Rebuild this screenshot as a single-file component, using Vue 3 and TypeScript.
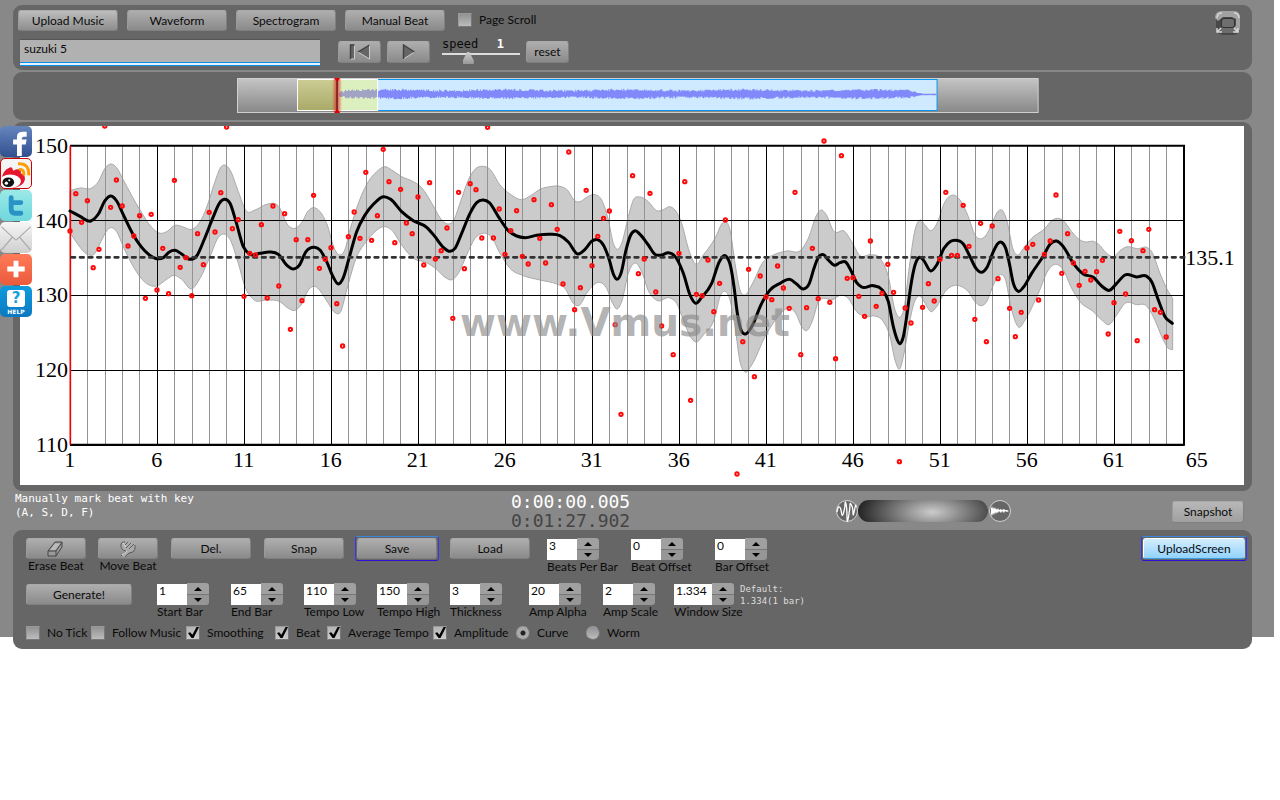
<script setup lang="ts">
import { reactive, ref } from 'vue'

type Pt = [number, number]
interface Field { id: string; label: string; value: number }
interface Tick { label: string; checked: boolean }

const shift = (dx: number, flat: number[]): Pt[] => {
  const out: Pt[] = []
  for (let i = 0; i < flat.length; i += 2) out.push([flat[i] + dx, flat[i + 1]])
  return out
}

// Chart space: three units per pixel, one beat every 17.4 units.
const barX = (bar: number): number => 211 + (bar - 1) * 52.2
const beatX = (i: number): number => 210 + i * 17.4

const curve: Pt[] = [
  ...shift(0, [210,273,240,289,272,303,295,282,315,242,333,228,350,243,368,280,400,345,435,393,470,416,490,413,508,396,525,391,545,402,570,418,590,408,612,360,640,290,658,250,674,238,690,250,708,305,730,380,750,403,780,400,810,396,835,403,862,437,880,447,897,437,918,395,943,382]),
  ...shift(960, [0,390,20,425,40,472,55,492,70,473,87,415,110,335,135,285,160,253,190,230,212,238,245,275,280,302,320,322,345,350,370,382,390,394,405,385,425,340,450,280,470,248,490,240,508,248,535,290,565,332,590,348,615,353,650,346,690,343,720,347,745,366,773,402,795,388,815,364,832,359,850,375,868,420,880,462,891,478,903,460,918,390,932,345,946,332]),
  ...shift(1920, [0,343,25,375,45,403,65,405,85,398,105,409,130,460,150,525,167,550,185,532,215,490,238,425,257,408,272,440,282,500,292,580,303,630,315,642,335,620,365,550,390,510,420,490,450,478,470,492,490,507,508,490,522,445,535,412,550,404,565,420,583,436,600,428,617,426,632,450,650,488,665,501,700,497,725,508,745,545,760,620,772,660,779,671,790,650,800,590,812,500,825,435,838,412,850,420,872,453,890,435,912,385,930,365]),
  ...shift(2850, [15,361,40,372,60,410,78,445,95,457,112,440,130,395,143,371,155,367,167,385,178,430,190,490,205,514,220,502,245,460,280,408,300,373,320,363,340,380,370,430,400,462,430,472,455,498,478,511,500,490,525,465,560,471,590,469,605,485,625,540,645,590,667,610]),
]
const upper: Pt[] = [
  ...shift(0, [210,212,240,204,275,204,295,185,315,145,333,132,350,143,370,180,420,270,455,322,480,340,500,335,525,316,550,321,575,328,595,313,615,275,645,185,660,145,675,135,690,150,715,215,738,272,765,270,800,253,835,258,865,317,885,325,905,308,925,272,943,263]),
  ...shift(960, [0,275,20,310,45,390,60,405,75,388,90,330,115,250,145,185,170,155,195,140,215,150,245,170,280,185,305,203,340,258,365,300,385,312,400,303,420,250,445,180,465,148,490,139,510,148,540,195,570,222,605,239,635,225,660,208,690,200,720,199,742,210,765,243,780,245,800,232,825,224,845,240,865,300,880,370,893,388,905,370,925,290,940,240,960,231]),
  ...shift(1920, [25,245,50,272,70,269,88,260,105,270,125,310,145,385,168,433,190,405,230,345,245,312,258,305,270,330,285,430,300,510,315,525,335,495,370,425,400,405,440,393,485,388,505,355,530,285,543,270,558,283,580,332,615,335,635,365,660,407,690,404,720,415,745,470,765,570,779,592,792,565,808,440,825,330,840,300,855,315,873,332,890,312,915,245]),
  ...shift(2850, [10,225,30,240,55,290,75,345,95,356,112,340,130,300,145,273,158,272,170,300,190,390,205,405,220,385,245,355,285,325,305,302,322,295,340,302,365,335,390,360,405,366,430,364,445,372,470,400,490,410,510,392,525,382,565,386,590,382,605,395,630,460,655,515,668,535]),
]
const lower: Pt[] = [
  ...shift(0, [210,338,235,375,260,402,285,400,305,360,322,330,335,323,350,335,370,380,400,440,435,487,470,498,500,478,522,466,545,478,575,507,600,475,630,410,655,352,672,342,690,358,715,430,735,500,760,538,800,540,840,545,865,565,885,571,905,552,925,510,945,499]),
  ...shift(960, [0,512,25,550,45,578,62,575,80,510,110,410,135,370,165,335,190,320,215,330,245,375,280,415,320,428,350,448,375,472,397,479,415,460,440,405,465,355,490,340,515,352,540,400,570,445,610,467,660,480,710,492,735,505,760,550,778,556,800,520,820,495,840,487,860,505,878,550,890,567,905,545,925,460,945,429,965,455]),
  ...shift(1920, [25,512,50,541,90,534,110,550,130,600,150,648,168,666,190,645,225,590,240,530,257,515,270,540,285,620,300,725,315,756,335,735,375,650,410,595,430,572,450,563,470,585,485,620,500,632,518,600,535,545,550,535,575,540,605,525,625,535,650,575,680,590,705,588,730,605,750,650,765,720,779,747,792,700,808,610,822,550,840,528,855,550,873,575,890,560,915,515]),
  ...shift(2850, [10,497,35,500,55,515,75,545,95,557,110,545,130,495,150,464,165,475,185,570,207,622,225,600,265,520,295,450,320,433,340,450,365,505,390,545,430,575,455,600,477,614,500,585,525,550,560,554,590,558,610,590,640,660,655,685,668,689]),
]
const beats: number[] = [
  333,221,307,242,443,388,18,262,180,258,378,348,287,535,283,510,385,521,181,442,413,527,341,434,277,336,218,21,326,299,
  529,400,405,314,534,258,498,281,628,359,542,359,226,445,418,383,551,678,350,276,355,157,361,287,88,185,368,208,309,341,
  231,435,188,417,392,324,595,217,446,191,209,354,22,354,267,403,332,272,409,432,239,355,429,254,328,492,96,569,503,211,
  437,349,295,273,614,883,-1,167,461,417,220,516,618,-1,704,400,185,841,523,527,420,575,490,300,-1,1062,665,448,770,468,
  531,539,438,504,565,217,704,563,385,536,63,547,716,107,475,473,529,589,363,559,520,433,517,1025,564,609,-1,562,491,543,
  418,217,406,406,256,379,598,310,665,318,476,-1,565,650,577,384,373,540,403,363,225,460,341,429,496,454,480,455,421,642,
  548,334,522,362,662,392,328,569,577,651,
]

// Smooth path through points ordered along x, written as cubic Bézier segments.
const spline = (p: Pt[]): string => {
  const last = p.length - 1
  const step = (i: number): number => (p[i + 1][1] - p[i][1]) / (p[i + 1][0] - p[i][0])
  const slope = (i: number): number => {
    if (i === 0) return step(0)
    if (i === last) return step(last - 1)
    const h0 = p[i][0] - p[i - 1][0]
    const h1 = p[i + 1][0] - p[i][0]
    return (h1 * step(i - 1) + h0 * step(i)) / (h0 + h1)
  }
  let d = ''
  for (let i = 0; i < last; i++) {
    const [x0, y0] = p[i]
    const [x1, y1] = p[i + 1]
    const h = (x1 - x0) / 3
    d += `C${(x0 + h).toFixed(1)} ${(y0 + h * slope(i)).toFixed(1)} ${(x1 - h).toFixed(1)} ${(y1 - h * slope(i + 1)).toFixed(1)} ${x1} ${y1}`
  }
  return d
}
const curvePath = `M${curve[0].join(' ')}${spline(curve)}`
const back = [...lower].reverse()
const bandPath = `M${upper[0].join(' ')}${spline(upper)}L${back[0].join(' ')}${spline(back)}Z`

const minorBars = Array.from({ length: 64 }, (_, i) => i + 1).filter((b) => b % 5 !== 1)
const majorBars = Array.from({ length: 13 }, (_, i) => 1 + i * 5)
const tempos = [150, 140, 130, 120, 110]
const tempoY = (t: number): number => 77 + (150 - t) * 22.45

const wave = (from: number, to: number): string => {
  let d = ''
  let seed = from * 7 + 3
  const rnd = (): number => (seed = (seed * 16807) % 2147483647) / 2147483647
  for (let x = from; x < to; x++) {
    const fade = x > 672 ? Math.max(0.08, 1 - (x - 672) / 14) : x < 108 ? 0.6 : 1
    const swell = 2.6 + Math.sin(x / 19) * 0.5
    d += `M${x + 0.5} ${(16 - (swell + rnd() * 2.3) * fade).toFixed(1)}V${(17 + (swell - 1 + rnd() * 2.3) * fade).toFixed(1)}`
  }
  return d
}
const waveShaded = wave(102, 140)
const waveOpen = wave(141, 699)

const tabs = ['Upload Music', 'Waveform', 'Spectrogram', 'Manual Beat']
const fileName = ref('suzuki 5')
const pageScroll = ref(false)
const speed = ref(31)
const mix = ref(50)
const topFields = reactive<Field[]>([
  { id: 'beats', label: 'Beats Per Bar', value: 3 },
  { id: 'beatoff', label: 'Beat Offset', value: 0 },
  { id: 'baroff', label: 'Bar Offset', value: 0 },
])
const fields = reactive<Field[]>([
  { id: 'start', label: 'Start Bar', value: 1 },
  { id: 'end', label: 'End Bar', value: 65 },
  { id: 'low', label: 'Tempo Low', value: 110 },
  { id: 'high', label: 'Tempo High', value: 150 },
  { id: 'thick', label: 'Thickness', value: 3 },
  { id: 'alpha', label: 'Amp Alpha', value: 20 },
  { id: 'scale', label: 'Amp Scale', value: 2 },
  { id: 'window', label: 'Window Size', value: 1.334 },
])
const ticks = reactive<Tick[]>([
  { label: 'No Tick', checked: false },
  { label: 'Follow Music', checked: false },
  { label: 'Smoothing', checked: true },
  { label: 'Beat', checked: true },
  { label: 'Average Tempo', checked: true },
  { label: 'Amplitude', checked: true },
])
const shape = ref('Curve')
</script>

<template>
  <main class="stage">
    <section class="panel head">
      <div class="row tabs">
        <button v-for="t in tabs" :key="t" class="btn tab">{{ t }}</button>
        <label class="check scroll"><input v-model="pageScroll" type="checkbox" />Page Scroll</label>
        <button class="full" aria-label="Full screen">
          <svg width="28" height="26" viewBox="0 0 28 26">
            <rect x="2" y="3" width="24" height="22" rx="7" fill="#484848" />
            <path d="M1 8Q1 1 8 1H20Q26 1 26 8V17Q26 22 22 23L19 18Q22 17 22 14V9L18 7H9L4 11Z" fill="#a2a2a2" />
            <path d="M5 21L8 17H19L22 22Q20 23 18 23H8Q6 23 5 21Z" fill="#6c6c6c" />
            <rect x="7.5" y="8.5" width="13" height="9" rx="2.5" fill="#6e6e6e" stroke="#333" />
            <path d="M3 8Q3 3 8 3M20 3Q25 3 25 8M3 18V22H8M3 22L7 18M24 18V22H19M24 22L20 18" fill="none" stroke="#d5d5d5" stroke-width="1.5" />
          </svg>
        </button>
      </div>
      <div class="row second">
        <input v-model="fileName" class="file" type="text" aria-label="File name" />
        <button class="btn media" aria-label="Back to start">
          <svg width="22" height="16" viewBox="0 0 22 16">
            <path d="M1.5 1H5.5V15H1.5ZM20.5 1V15L9 8Z" fill="#666" />
            <path d="M5.5 1V15H1.5M9 8L20.5 15V1" fill="none" stroke="#ccc" />
            <path d="M1.5 15V1H5.5M20.5 1L9 8" fill="none" stroke="#404040" stroke-width="1.4" />
          </svg>
        </button>
        <button class="btn media" aria-label="Play">
          <svg width="14" height="16" viewBox="0 0 14 16">
            <path d="M1.5 1L12.5 8L1.5 15Z" fill="#666" />
            <path d="M1.5 15L12.5 8" stroke="#ccc" />
            <path d="M1.5 15V1L12.5 8" fill="none" stroke="#404040" stroke-width="1.4" />
          </svg>
        </button>
        <label class="speed">
          <span class="speed-text">speed<b>1</b></span>
          <input v-model="speed" type="range" min="0" max="100" />
        </label>
        <button class="btn media">reset</button>
      </div>
    </section>

    <section class="panel overview">
      <svg class="overview-map" viewBox="0 0 801 35" preserveAspectRatio="none">
        <defs>
          <linearGradient id="grey" x2="0" y2="1"><stop offset="0" stop-color="#c4c4c4" /><stop offset="1" stop-color="#888" /></linearGradient>
          <linearGradient id="olive" x2="0" y2="1"><stop offset="0" stop-color="#cbcd94" /><stop offset="1" stop-color="#a9a968" /></linearGradient>
          <linearGradient id="glow"><stop offset="0" stop-color="#e03020" stop-opacity="0" /><stop offset="0.5" stop-color="#e82020" /><stop offset="1" stop-color="#e03020" stop-opacity="0" /></linearGradient>
        </defs>
        <rect x="0.5" y="0.5" width="800" height="34" fill="url(#grey)" stroke="#d0d0d0" />
        <rect x="100" y="1.5" width="599.5" height="31" fill="#cfeaff" stroke="#0a96ee" />
        <rect x="60.5" y="1.5" width="40" height="31" fill="url(#olive)" stroke="#fff" />
        <rect x="100.5" y="1.5" width="40" height="31" fill="#dcefbf" stroke="#fff" />
        <path :d="waveShaded" stroke="#a0a3c4" />
        <path :d="waveOpen" stroke="#8088fa" />
        <rect x="95" y="1" width="10" height="33" fill="url(#glow)" opacity="0.8" />
        <path d="M100 1V34" stroke="#300" />
        <path d="M97 0H103L101 3H99ZM97 35H103L101 32H99Z" fill="#e00000" />
      </svg>
    </section>

    <section class="panel plot">
      <svg class="chart" viewBox="60 18 3672 1077">
        <rect x="60" y="18" width="3672" height="1077" fill="#fff" />
        <path :d="bandPath" fill="#cbcbcb" stroke="#aaa" stroke-width="3" />
        <g shape-rendering="crispEdges" stroke-width="3">
          <path v-for="b in minorBars" :key="b" :d="`M${barX(b)} 77V974`" stroke="#939393" />
          <path v-for="b in majorBars" :key="b" :d="`M${barX(b)} 77V974`" stroke="#000" />
          <path v-for="t in tempos" :key="t" :d="`M210 ${tempoY(t)}H3552`" stroke="#000" />
        </g>
        <path d="M210 77H3552V974H210" fill="none" stroke="#000" stroke-width="6" />
        <path d="M211 77V974" stroke="#f00000" stroke-width="5" />
        <path :d="curvePath" class="line" stroke="#000" stroke-width="9" />
        <path d="M214 412H3558" class="line" stroke="#333" stroke-width="8" stroke-dasharray="11 15" />
        <template v-for="(y, i) in beats" :key="i">
          <circle v-if="y >= 0" :cx="beatX(i)" :cy="y" r="5" fill="none" stroke="#ff0a0a" stroke-width="6" />
        </template>
        <g class="axis">
          <text v-for="t in tempos" :key="t" x="204" :y="tempoY(t) + 21" text-anchor="end">{{ t }}</text>
          <text v-for="b in majorBars" :key="b" :x="barX(b) - 2" y="1041" text-anchor="middle">{{ b }}</text>
          <text x="3590" y="1041" text-anchor="middle">65</text>
          <text x="3556" y="434">135.1</text>
        </g>
        <text class="mark" x="1380" y="647">www.Vmus.net</text>
      </svg>
    </section>

    <section class="strip">
      <p class="hint">Manually mark beat with key<br />(A, S, D, F)</p>
      <div class="clock"><div class="now">0:00:00.005</div><div>0:01:27.902</div></div>
      <div class="mix">
        <svg width="22" height="24" viewBox="0 0 22 24">
          <circle cx="11" cy="12" r="10.5" fill="#666" stroke="#d0d0d0" />
          <path d="M1 13Q2 7 3.5 8T5.5 14T7.500 14T9 5T10 5T11 18T12.500 18T14 6T15.500 6T17 14T18.500 11T20 8" fill="none" stroke="#fff" stroke-width="1.3" />
        </svg>
        <input v-model="mix" type="range" aria-label="Volume" />
        <svg width="22" height="24" viewBox="0 0 22 24">
          <circle cx="11" cy="12" r="10.5" fill="#666" stroke="#d0d0d0" />
          <path d="M2 8L3 9V7L4 10L5 8L6 10L7 9L8 11L9 9L10 11L12 10L13 11L15 10L16 11L18 11L20 12L18 13L16 12L15 14L13 12L12 14L10 12L9 14L8 13L7 15L6 13L5 16L4 14L3 17L2 15Z" fill="#fff" />
        </svg>
      </div>
      <button class="btn snapshot">Snapshot</button>
    </section>

    <section class="panel controls">
      <div class="row actions">
        <div class="tool">
          <button id="erase" class="btn">
            <svg width="20" height="18" viewBox="0 0 20 18">
              <path d="M2 11L9 2H16L16 7L10 16H2Z" fill="#9b9b9b" stroke="#444" stroke-linejoin="round" />
              <path d="M2 11H10L16 2.5M10 11V16" fill="none" stroke="#444" />
              <path d="M9 3.500H14L9 10H4Z" fill="#bbb" />
            </svg>
          </button>
          <label for="erase">Erase Beat</label>
        </div>
        <div class="tool">
          <button id="move" class="btn">
            <svg width="20" height="18" viewBox="0 0 20 18">
              <path d="M3 16L8 11Q3 10 3 5Q3 1 7 2L10 3L14 2Q17 2 17 7Q17 12 11 13L7 17Z" fill="#ababab" />
              <path d="M3 16L8 11Q2 10 3 4Q4 1 7 2M7 5L10 2M8 8L13 3M11 9L16 4M17 5V9Q16 13 11 13L7 17" fill="none" stroke="#5c5c5c" />
              <path d="M5 3L8 7M4 15L9 11" stroke="#ddd" />
            </svg>
          </button>
          <label for="move">Move Beat</label>
        </div>
        <button class="btn wide">Del.</button>
        <button class="btn wide">Snap</button>
        <button class="btn wide focused">Save</button>
        <button class="btn wide">Load</button>
        <div class="top-fields">
          <div v-for="f in topFields" :key="f.id" class="field">
            <div class="spin">
              <input :id="f.id" v-model="f.value" type="number" />
              <span class="steps">
                <button :aria-label="`Increase ${f.label}`" @click="f.value++"></button>
                <button :aria-label="`Decrease ${f.label}`" @click="f.value--"></button>
              </span>
            </div>
            <label :for="f.id">{{ f.label }}</label>
          </div>
        </div>
        <button class="btn upload focused">UploadScreen</button>
      </div>

      <div class="settings">
        <button class="btn generate">Generate!</button>
        <div v-for="f in fields" :key="f.id" class="field" :class="f.id">
          <div class="spin">
            <input :id="f.id" v-model="f.value" type="number" step="any" />
            <span class="steps">
              <button :aria-label="`Increase ${f.label}`" @click="f.value++"></button>
              <button :aria-label="`Decrease ${f.label}`" @click="f.value--"></button>
            </span>
          </div>
          <label :for="f.id">{{ f.label }}</label>
        </div>
        <p class="default">Default:<br />1.334(1 bar)</p>
      </div>

      <div class="options">
        <label v-for="t in ticks" :key="t.label" class="check"><input v-model="t.checked" type="checkbox" />{{ t.label }}</label>
        <label v-for="s in ['Curve', 'Worm']" :key="s" class="check"><input v-model="shape" type="radio" name="shape" :value="s" />{{ s }}</label>
      </div>
    </section>

    <nav class="social">
      <a href="#" class="fb" aria-label="Facebook">
        <svg viewBox="0 0 32 32"><path d="M17 31V19H13V14H17V11Q17 6 23 6H27V11H24Q22 11 22 13V14H27L26 19H22V31Z" fill="#fff" /></svg>
      </a>
      <a href="#" class="weibo" aria-label="Weibo">
        <svg viewBox="0 0 32 32">
          <path d="M0 21Q1 12 8 9Q11 7 12 12Q18 9 20 12V15Q25 16 24 22Q22 29 11 30Q2 30 0 21Z" fill="#e6162d" />
          <ellipse cx="9" cy="23" rx="11" ry="7" fill="#fff" /><ellipse cx="7" cy="24" rx="6" ry="5" fill="#111" />
          <circle cx="5" cy="25" r="1.7" fill="#fff" /><circle cx="8" cy="22" r="1" fill="#fff" />
          <path d="M17 5Q29 4 28 17M18 11Q24 10 23 17" fill="none" stroke="#ff9c00" stroke-width="3" />
        </svg>
      </a>
      <a href="#" class="tw" aria-label="Twitter">
        <svg viewBox="0 0 32 32"><path d="M11 8V19Q11 24 15 24H21M11 13H21" fill="none" stroke="#2a93c5" stroke-width="5" stroke-linecap="round" /></svg>
      </a>
      <a href="#" class="mail" aria-label="Mail">
        <svg viewBox="0 0 32 32"><path d="M1 5L15 18Q16 19 17 18L31 5M1 29L12 16M31 29L20 16" fill="none" stroke="#aaa" stroke-width="1.2" /></svg>
      </a>
      <a href="#" class="plus" aria-label="Share">
        <svg viewBox="0 0 32 32"><path d="M16 7V24M7 15.500H25" fill="none" stroke="#fff" stroke-width="5" /></svg>
      </a>
      <a href="#" class="help"><b>?</b><span>HELP</span></a>
    </nav>
  </main>
</template>

<style>
body {
  margin: 0;
  background: #fff;
}
</style>

<style scoped>
* {
  box-sizing: border-box;
}
button,
input {
  font: inherit;
  color: inherit;
}
p {
  margin: 0;
}
.stage {
  position: relative;
  margin-right: 6px;
  padding: 5px 22px 0 13px;
  background: linear-gradient(#888, #888) no-repeat 0 0 / 100% calc(100% - 12px);
  font: 12px/14px Lato, 'Open Sans', sans-serif;
  color: #0a0a0a;
}
.panel {
  background: #666;
  border-radius: 9px;
  margin-bottom: 2px;
}
.row {
  display: flex;
  align-items: flex-start;
}
.btn {
  height: 21px;
  padding: 0;
  border: 1px solid #777;
  border-color: #aaa #808080 #808080 #9a9a9a;
  border-radius: 3px;
  background: linear-gradient(#aeaeae, #8a8a8a);
  display: flex;
  align-items: center;
  justify-content: center;
  flex: none;
}
.head {
  padding: 5px 10px 4px 5px;
}
.head .row {
  gap: 9px;
}
.head .tabs {
  height: 21px;
}
.head .second {
  padding: 6px 0 0 2px;
  gap: 6px;
}
.tab {
  width: 100px;
}
.tab:first-child {
  background: linear-gradient(#bdbdbd, #8e8e8e);
}
.check {
  display: flex;
  align-items: center;
  gap: 7px;
  overflow: hidden;
  white-space: nowrap;
}
.scroll {
  margin: 3px 0 0 4px;
}
.check input {
  appearance: none;
  flex: none;
  width: 14px;
  height: 14px;
  margin: 0;
  border: 1px solid #777;
  border-color: #999 #777 #777 #999;
  background: linear-gradient(#929292, #bcbcbc);
}
.check input[type='checkbox']:checked {
  background: linear-gradient(#b4b4b4, #ccc);
  position: relative;
}
.check input[type='checkbox']:checked::after {
  content: '';
  position: absolute;
  inset: 0 0 1px 1px;
  background: #000;
  clip-path: polygon(0 55%, 20% 48%, 40% 70%, 78% 0, 100% 0, 50% 100%, 32% 100%);
}
.check input[type='radio'] {
  border-radius: 50%;
}
.check input[type='radio']:checked {
  background: radial-gradient(circle, #222 0 2px, #aaa 3px);
}
.full {
  margin-left: auto;
  padding: 0;
  border: 0;
  background: none;
  width: 28px;
  height: 26px;
}
.file {
  width: 300px;
  height: 27px;
  margin: 2px 12px 0 0;
  padding: 0 4px 9px;
  border: 0;
  border-top: 1px solid #555;
  border-bottom: 1px solid #0a90ea;
  box-shadow: inset 0 -2px #e4f4ff, inset 0 -3px #0a90ea;
  background: #b1b1b1;
  outline: none;
}
.media {
  width: 43px;
  height: 22px;
  margin-top: 4px;
}
.speed {
  width: 78px;
  margin-left: 6px;
}
.speed-text {
  display: flex;
  justify-content: space-between;
  padding-right: 16px;
  font: 12px/15px 'DejaVu Sans Mono', monospace;
}
.speed-text b {
  color: #fff;
}
.speed input {
  appearance: none;
  display: block;
  width: 100%;
  height: 12px;
  margin: 0;
  background: linear-gradient(#ddd, #ddd) 0 1px / 100% 2px no-repeat;
}
.speed input::-webkit-slider-thumb {
  appearance: none;
  width: 11px;
  height: 12px;
  background: linear-gradient(#ccc, #999);
  clip-path: polygon(40% 0, 60% 0, 100% 70%, 100% 100%, 0 100%, 0 70%);
}
.overview {
  padding: 6px 0 7px;
}
.overview-map {
  display: block;
  width: 64.7%;
  height: 35px;
  margin-left: 18.1%;
}
.plot {
  padding: 4px 8px 6px 7px;
  margin-bottom: 0;
}
.chart {
  display: block;
  width: 100%;
  height: auto;
}
.line {
  fill: none;
  stroke-linecap: round;
}
.axis {
  font: 66px 'Liberation Serif', serif;
  fill: #000;
}
.mark {
  font: bold 117px 'DejaVu Sans', sans-serif;
  fill: #888;
  fill-opacity: 0.65;
}
.strip {
  display: flex;
  height: 39px;
  color: #fff;
}
.hint {
  flex: 0 1 498px;
  padding: 1px 0 0 2px;
  font: 11px/14px 'DejaVu Sans Mono', monospace;
}
.clock {
  flex: 0 1 325px;
  padding-top: 1px;
  font: 18px/19px 'DejaVu Sans Mono', monospace;
  color: #444;
}
.now {
  color: #fff;
}
.mix {
  display: flex;
  align-items: center;
  height: 39px;
}
.mix input {
  appearance: none;
  width: 130px;
  height: 22px;
  margin: 0 1px 0 0;
  border-radius: 11px;
  background: radial-gradient(ellipse 75px 32px at 57% 55%, #ccc, #777 50%, #222 100%);
}
.mix input::-webkit-slider-thumb {
  appearance: none;
  width: 1px;
  height: 1px;
}
.snapshot {
  width: 72px;
  height: 22px;
  margin: 10px 8px 0 auto;
  color: #0a0a0a;
  background: linear-gradient(#b8b8b8, #a0a0a0);
}
.controls {
  padding: 8px 7px 9px 13px;
  margin-bottom: 0;
}
.actions {
  gap: 12px;
  height: 45px;
}
.tool {
  width: 60px;
}
.tool .btn {
  width: 60px;
}
.tool label {
  display: flex;
  justify-content: center;
  white-space: nowrap;
}
.wide {
  width: 80px;
  margin-left: 1px;
}
.focused {
  position: relative;
}
.focused::after {
  content: '';
  position: absolute;
  inset: -3px;
  border: 1px solid #2c50ea;
  border-color: #3a86dc #3438e8 #3010d8 #3438e8;
  border-radius: 3px;
}
.top-fields {
  display: flex;
  margin-left: 5px;
}
.top-fields .field {
  width: 84px;
}
.upload {
  width: 102px;
  margin-left: auto;
  background: linear-gradient(#d2eeff, #93d2fc);
  border-color: #fff #a8dcff #3c9ee0 #fff;
}
.field label {
  display: block;
  white-space: nowrap;
}
.spin {
  display: flex;
  height: 22px;
  width: max-content;
}
.spin input {
  appearance: textfield;
  width: 30px;
  height: 21px;
  margin-top: 1px;
  padding: 0 2px 9px;
  border: 0;
  background: #fff;
}
.spin input::-webkit-inner-spin-button {
  appearance: none;
}
.window .spin input {
  width: 38px;
}
.steps {
  display: flex;
  flex-direction: column;
  width: 22px;
  height: 22px;
  border-radius: 0 3px 3px 0;
  overflow: hidden;
}
.steps button {
  display: flex;
  align-items: center;
  justify-content: center;
  height: 11px;
  padding: 0;
  border: 0;
  background: #a0a0a0;
}
.steps button:last-child {
  background: #969696;
  border-top: 1px solid #777;
}
.steps button::after {
  content: '';
  border: 4px solid transparent;
  border-top-width: 0;
  border-bottom-color: #000;
}
.steps button:last-child::after {
  border: 4px solid transparent;
  border-bottom-width: 0;
  border-top-color: #000;
}
.settings {
  display: grid;
  grid-template-columns: 131px 74px 73px 73px 73px 79px 74px 71px 66px auto;
  height: 43px;
}
.generate {
  width: 106px;
  margin-top: 1px;
}
.default {
  font: 9px/12px 'DejaVu Sans Mono', monospace;
  color: #ddd;
}
.options {
  display: grid;
  grid-template-columns: 65px 95px 89px 52px 106px 83px 70px 80px;
}
.social {
  position: absolute;
  left: 0;
  top: 126px;
  width: 32px;
}
.social a {
  display: block;
  height: 31px;
  margin-bottom: 1px;
  border-radius: 5px;
  overflow: hidden;
}
.social svg {
  display: block;
  width: 32px;
  height: 31px;
}
.fb {
  background: linear-gradient(#6585bd, #32508f);
}
.weibo {
  background: #f4f4f4;
  border: 1px solid #c00;
}
.tw {
  background: linear-gradient(#9be9e7, #6fd8dc);
}
.mail {
  background: linear-gradient(#f6f6f6, #cfcfcf);
}
.plus {
  background: linear-gradient(#ff7a58, #e95b3c);
}
.social .help {
  display: flex;
  flex-direction: column;
  align-items: center;
  padding-top: 4px;
  background: linear-gradient(#0e9be0, #0b78c0);
  color: #fff;
  text-decoration: none;
  font: bold 6px/9px 'DejaVu Sans', sans-serif;
}
.help b {
  width: 18px;
  height: 17px;
  border-radius: 3px;
  background: #fff;
  color: #16a0dd;
  text-align: center;
  font-size: 15px;
  line-height: 17px;
}
</style>
